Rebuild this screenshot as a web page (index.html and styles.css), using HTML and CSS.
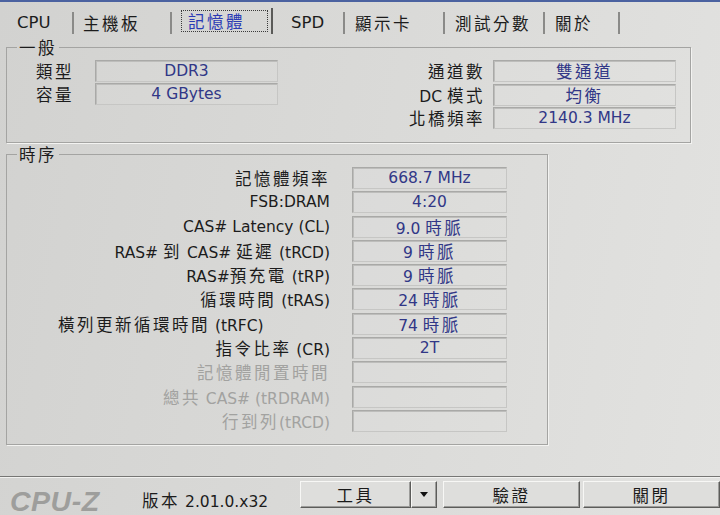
FILE: index.html
```html
<!DOCTYPE html>
<html lang="zh-Hant">
<head>
<meta charset="utf-8">
<title>CPU-Z</title>
<link rel="stylesheet" href="styles.css">
</head>
<body>
<div class="win">
  <div class="tabs">
    <div class="tab t1">CPU</div>
    <div class="tab t2"><span class="c">主機板</span></div>
    <div class="tab sel"><span class="focus"><span class="c">記憶體</span></span></div>
    <div class="tab t4">SPD</div>
    <div class="tab t5"><span class="c">顯示卡</span></div>
    <div class="tab t6"><span class="c">測試分數</span></div>
    <div class="tab t7"><span class="c">關於</span></div>
  </div>

  <div class="panel">
    <fieldset class="group gen">
      <legend><span class="c">一般</span></legend>
      <div class="genbody">
        <div class="grid gl">
          <div class="lbl"><span class="c">類型</span></div>
          <div class="fld">DDR3</div>
          <div class="lbl"><span class="c">容量</span></div>
          <div class="fld">4 GBytes</div>
        </div>
        <div class="grid gr">
          <div class="lbl r"><span class="c">通道數</span></div>
          <div class="fld"><span class="c">雙通道</span></div>
          <div class="lbl r">DC <span class="c">模式</span></div>
          <div class="fld"><span class="c">均衡</span></div>
          <div class="lbl r"><span class="c">北橋頻率</span></div>
          <div class="fld">2140.3 MHz</div>
        </div>
      </div>
    </fieldset>

    <fieldset class="group tim">
      <legend><span class="c">時序</span></legend>
      <div class="grid tg">
        <div class="lbl r"><span class="c">記憶體頻率</span></div>
        <div class="fld">668.7 MHz</div>
        <div class="lbl r">FSB:DRAM</div>
        <div class="fld">4:20</div>
        <div class="lbl r">CAS# Latency (CL)</div>
        <div class="fld">9.0 <span class="c">時脈</span></div>
        <div class="lbl r">RAS# <span class="c">到</span> CAS# <span class="c">延遲</span> (tRCD)</div>
        <div class="fld">9 <span class="c">時脈</span></div>
        <div class="lbl r">RAS#<span class="c">預充電</span> (tRP)</div>
        <div class="fld">9 <span class="c">時脈</span></div>
        <div class="lbl r"><span class="c">循環時間</span> (tRAS)</div>
        <div class="fld">24 <span class="c">時脈</span></div>
        <div class="lbl long"><span class="c">橫列更新循環時間</span> (tRFC)</div>
        <div class="fld">74 <span class="c">時脈</span></div>
        <div class="lbl r"><span class="c">指令比率</span> (CR)</div>
        <div class="fld">2T</div>
        <div class="lbl r dis"><span class="c">記憶體閒置時間</span></div>
        <div class="fld"></div>
        <div class="lbl r dis"><span class="c">總共</span> CAS# (tRDRAM)</div>
        <div class="fld"></div>
        <div class="lbl r dis"><span class="c">行到列</span>(tRCD)</div>
        <div class="fld"></div>
      </div>
    </fieldset>
  </div>

  <div class="bottom">
    <div class="logo">CPU-Z</div>
    <div class="ver"><span class="c">版本</span> 2.01.0.x32</div>
    <div class="split">
      <div class="btn main"><span class="c">工具</span></div>
      <div class="btn arrow"><span class="tri"></span></div>
    </div>
    <div class="btn verify"><span class="c">驗證</span></div>
    <div class="btn close"><span class="c">關閉</span></div>
  </div>
</div>
</body>
</html>
```

FILE: styles.css
```css
* { box-sizing: border-box; }

html, body {
  margin: 0;
  padding: 0;
}

body {
  width: 720px;
  height: 515px;
  overflow: hidden;
  background: linear-gradient(100deg, #d2d2d0 0%, #d9d9d7 45%, #e2e2e0 100%);
  font-family: "DejaVu Sans", "Noto Sans CJK TC", sans-serif;
  font-size: 15.5px;
  color: #1e1e1e;
}

.c {
  font-family: "Noto Sans CJK TC", "Noto Sans CJK SC", sans-serif;
  font-size: 16.5px;
  letter-spacing: 2.5px;
}

.win {
  display: flex;
  flex-direction: column;
  height: 515px;
  border-top: 2px solid #4b62a0;
}

/* ---------- tabs ---------- */
.tabs {
  display: flex;
  align-items: flex-end;
  height: 32px;
  padding-left: 5px;
  flex: none;
}

.tab {
  height: 22px;
  padding-top: 1px;
  font-size: 16.5px;
  line-height: 20px;
  color: #1c1c1c;
  border-right: 2px solid #8a8a88;
  white-space: nowrap;
}

.t1 { width: 69px; padding-left: 12px; }
.t2 { width: 98px; padding-left: 9px; }
.t4 { width: 72px; padding-left: 18px; }
.t5 { width: 100px; padding-left: 10px; }
.t6 { width: 100px; padding-left: 10px; }
.t7 { width: 75px; padding-left: 10px; }

.tab.sel {
  width: 101px;
  height: 26px;
  padding: 2px 0 2px 9px;
  border-right: 2px solid #5a5a58;
  color: #2b3bb4;
}

.focus {
  display: block;
  width: 87px;
  height: 22px;
  padding-left: 6px;
  line-height: 20px;
  border: 1px dotted #3a3a3a;
}

/* ---------- panel ---------- */
.panel {
  flex: 1;
  padding: 3px 0 0 6px;
}

.group {
  margin: 0;
  min-width: 0;
  border: 1px solid #a4a4a2;
  box-shadow: 1px 1px 0 #f3f3f1;
}

.group legend {
  margin-left: 10px;
  padding: 0 2px;
  line-height: 20px;
  height: 20px;
  color: #1c1c1c;
}

.gen {
  width: 685px;
  padding: 3px 0 13px 0;
}

.genbody {
  display: flex;
  justify-content: space-between;
  padding: 0 14px 0 29px;
}

.grid {
  display: grid;
  grid-auto-rows: 22px;
}

.gl {
  grid-template-columns: 59px 183px;
  row-gap: 1px;
}

.gr {
  grid-template-columns: auto 183px;
  column-gap: 8px;
  row-gap: 1.5px;
}

.tim {
  width: 542px;
  margin-top: 1px;
  padding: 3px 0 12px 0;
}

.tg {
  grid-template-columns: 323px 155px;
  column-gap: 22px;
  row-gap: 2.3px;
}

.lbl {
  line-height: 22px;
  white-space: nowrap;
  color: #1c1c1c;
}

.lbl.r { text-align: right; }

.lbl.long {
  text-align: left;
  padding-left: 51px;
}

.lbl.dis { color: #a2a2a0; }

.fld {
  line-height: 20px;
  text-align: center;
  white-space: nowrap;
  color: #313787;
  border: 1px solid #a9a9a7;
  border-right-color: #c6c6c4;
  border-bottom-color: #c6c6c4;
  box-shadow: inset 1px 1px 0 #bdbdbb;
  background: rgba(255, 255, 255, 0.05);
}

/* ---------- bottom bar ---------- */
.bottom {
  flex: none;
  height: 39px;
  display: flex;
  align-items: flex-start;
  padding-top: 4px;
  border-top: 1px solid #767674;
  box-shadow: inset 0 1px 0 #f1f1ef;
}

.logo {
  width: 133px;
  margin-left: 10px;
  margin-top: 5.5px;
  font-family: "Liberation Sans", Arial, sans-serif;
  font-weight: bold;
  font-style: italic;
  font-size: 28.5px;
  line-height: 28px;
  letter-spacing: 0.5px;
  color: #9e9e9c;
}

.ver {
  width: 159px;
  margin-top: 9px;
  line-height: 20px;
  color: #1c1c1c;
  white-space: nowrap;
}

.split {
  display: flex;
  width: 137px;
  height: 27px;
}

.btn {
  height: 27px;
  display: flex;
  align-items: center;
  justify-content: center;
  background: #dededc;
  border: 1px solid;
  border-color: #f7f7f5 #5c5c5a #5c5c5a #f7f7f5;
  box-shadow: inset -1px -1px 0 #9c9c9a;
  color: #1a1a1a;
  flex: none;
}

.main { width: 111px; }
.arrow { width: 26px; }

.tri {
  width: 0;
  height: 0;
  border-left: 4.5px solid transparent;
  border-right: 4.5px solid transparent;
  border-top: 5px solid #111;
}

.verify { width: 137px; margin-left: 6px; }
.close { width: 137px; margin-left: 3px; }
```
